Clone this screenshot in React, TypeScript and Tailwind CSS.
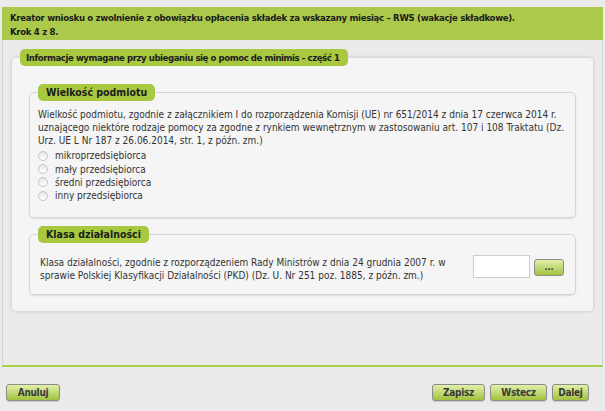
const font = "font-['DejaVu_Sans',sans-serif] font-stretch-condensed";

function GreenButton({ label, width }: { label: string; width: string }) {
  return (
    <button
      type="button"
      className={`${width} h-[17px] rounded-[3px] border border-[#8c8c8c] bg-gradient-to-b from-[#e2f0a8] to-[#a2c23a] text-[10px] font-bold leading-[15px] tracking-[-0.3px] text-[#3a3a3a] shadow-[0_1px_1px_rgba(0,0,0,0.15)]`}
    >
      {label}
    </button>
  );
}

function Radio({ label }: { label: string }) {
  return (
    <label className="flex h-[13.4px] items-center gap-[7px]">
      <input
        type="radio"
        name="wielkosc"
        className="h-[10px] w-[10px] appearance-none rounded-full border border-[#c4c4c4] bg-gradient-to-b from-[#e6e6e6] to-[#ffffff]"
      />
      <span>{label}</span>
    </label>
  );
}

export default function App() {
  return (
    <div className={`${font} h-[411px] w-[605px] bg-[#ebebeb] pt-[7px] text-[10px] text-[#333]`}>
      <div className="mx-[2px] h-[33px] bg-[#abc94a] px-[8px] pt-[4px] text-[9.5px] font-bold leading-[14px] tracking-[-0.3px] text-[#1c1c1c]">
        Kreator wniosku o zwolnienie z obowiązku opłacenia składek za wskazany miesiąc – RWS (wakacje składkowe).
        <br />
        Krok 4 z 8.
      </div>

      <div className="mx-[2px] h-[327px] border-x border-b-2 border-x-[#d4d4d4] border-b-[#a8d048] pt-[9px]">
        <fieldset className="mx-2 rounded-[5px] border border-[#dadada] bg-[#f5f5f5] px-2 pb-[16px] shadow-[0_0_3px_rgba(0,0,0,0.12)]">
          <legend className="h-[17px] rounded-[5px] bg-[#a8c840] pl-[6px] pr-[8px] text-[9.5px] font-bold leading-[17px] tracking-[-0.42px] text-[#1c1c1c]">
            Informacje wymagane przy ubieganiu się o pomoc de minimis - część 1
          </legend>

          <fieldset className="mx-[9px] mt-[18px] rounded-[5px] border border-[#d6d6d6] bg-[#f5f5f5] px-2 pb-[14px] shadow-[0_1px_2px_rgba(0,0,0,0.1)]">
            <legend className="h-[17px] rounded-[5px] bg-[#a8c840] px-[8px] text-[10.5px] font-bold leading-[17px] text-[#1c1c1c]">
              Wielkość podmiotu
            </legend>
            <p className="pt-[7px] leading-[13px]">
              Wielkość podmiotu, zgodnie z załącznikiem I do rozporządzenia Komisji (UE) nr 651/2014 z dnia 17 czerwca 2014 r.
              <br />
              uznającego niektóre rodzaje pomocy za zgodne z rynkiem wewnętrznym w zastosowaniu art. 107 i 108 Traktatu (Dz.
              <br />
              Urz. UE L Nr 187 z 26.06.2014, str. 1, z późn. zm.)
            </p>
            <div className="mt-[2px] flex flex-col">
              <Radio label="mikroprzedsiębiorca" />
              <Radio label="mały przedsiębiorca" />
              <Radio label="średni przedsiębiorca" />
              <Radio label="inny przedsiębiorca" />
            </div>
          </fieldset>

          <fieldset className="mx-[9px] mt-[8px] rounded-[5px] border border-[#d6d6d6] bg-[#f5f5f5] pb-[12px] pl-[10px] pr-[11px] shadow-[0_1px_2px_rgba(0,0,0,0.1)]">
            <legend className="-ml-[2px] h-[17px] rounded-[5px] bg-[#a8c840] px-[8px] text-[10.5px] font-bold leading-[17px] text-[#1c1c1c]">
              Klasa działalności
            </legend>
            <div className="mt-[12px] flex items-start">
              <p className="mt-[1px] flex-1 leading-[13px]">
                Klasa działalności, zgodnie z rozporządzeniem Rady Ministrów z dnia 24 grudnia 2007 r. w
                <br />
                sprawie Polskiej Klasyfikacji Działalności (PKD) (Dz. U. Nr 251 poz. 1885, z późn. zm.)
              </p>
              <input
                type="text"
                className="h-[23px] w-[57px] border border-[#cfcfcf] bg-white"
              />
              <button
                type="button"
                className="ml-[4px] mt-[4px] h-[17px] w-[30px] rounded-[3px] border border-[#8c8c8c] bg-gradient-to-b from-[#e2f0a8] to-[#a2c23a] text-[9px] font-bold leading-[12px] text-[#333]"
              >
                ...
              </button>
            </div>
          </fieldset>
        </fieldset>
      </div>

      <div className="mt-[17px] flex items-center pl-[6px] pr-[16px]">
        <GreenButton label="Anuluj" width="w-[54px]" />
        <div className="ml-auto flex gap-[5px]">
          <GreenButton label="Zapisz" width="w-[53px]" />
          <GreenButton label="Wstecz" width="w-[57px]" />
          <GreenButton label="Dalej" width="w-[37px]" />
        </div>
      </div>
    </div>
  );
}
